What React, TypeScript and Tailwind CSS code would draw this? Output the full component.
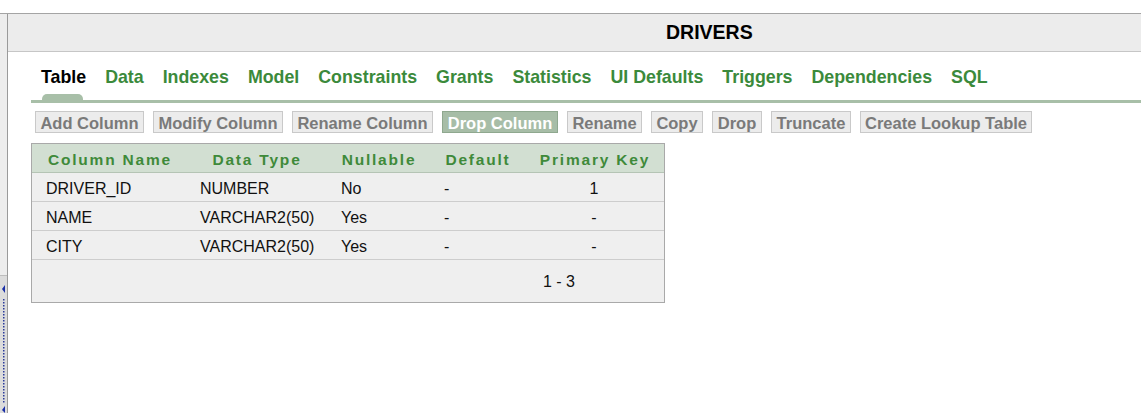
import React from 'react';

const tabs = ['Table', 'Data', 'Indexes', 'Model', 'Constraints', 'Grants', 'Statistics', 'UI Defaults', 'Triggers', 'Dependencies', 'SQL'];

const buttons = [
	{ label: 'Add Column', w: 'w-[109px]' },
	{ label: 'Modify Column', w: 'w-[130px]' },
	{ label: 'Rename Column', w: 'w-[141px]' },
	{ label: 'Drop Column', w: 'w-[116px]', active: true },
	{ label: 'Rename', w: 'w-[75px]' },
	{ label: 'Copy', w: 'w-[52px]' },
	{ label: 'Drop', w: 'w-[50px]' },
	{ label: 'Truncate', w: 'w-[80px]' },
	{ label: 'Create Lookup Table', w: 'w-[172px]' },
];

const rows = [
	['DRIVER_ID', 'NUMBER', 'No', '-', '1'],
	['NAME', 'VARCHAR2(50)', 'Yes', '-', '-'],
	['CITY', 'VARCHAR2(50)', 'Yes', '-', '-'],
];

const headers = ['Column Name', 'Data Type', 'Nullable', 'Default', 'Primary Key'];

const Splitter = () => (
	<svg width="7" height="137" viewBox="0 0 7 137" className="block">
		<path d="M5 9 L2 13 L5 17 Z" fill="#1a2fa8" />
		{Array.from({ length: 35 }).map((_, i) => (
			<rect key={i} x="3" y={23 + i * 3} width="1.5" height="1.5" fill="#2a3a9a" />
		))}
		<path d="M5 130 L2 134 L5 137 Z" fill="#1a2fa8" />
	</svg>
);

const App = () => {
	return (
		<div className="w-[1141px] h-[413px] overflow-hidden bg-white font-['Liberation_Sans',Arial,sans-serif]">
			<div className="h-[13px]" />
			<div className="flex h-[400px] border-t border-[#a4a4a4]">
				{/* Left pane */}
				<div className="flex w-[7px] flex-col">
					<div className="h-[263px] bg-[#ededed]" />
					<div className="flex-1 border-t border-[#bdbdbd] bg-[#dcdcdc]">
						<Splitter />
					</div>
				</div>
				<div className="w-px bg-[#9a9a9a]" />

				{/* Main */}
				<div className="flex flex-1 flex-col">
					<div className="flex h-[38px] items-center border-b border-[#c6c6c6] bg-[#ececec] pl-[658px]">
						<span className="text-[19.5px] font-bold text-black">DRIVERS</span>
					</div>

					<div className="pl-[23px]">
						{/* Tabs */}
						<div className="relative mt-[13px] flex h-[38px] items-start border-b-[3px] border-[#a8bfa8] pl-[10px]">
							{tabs.map((t, i) => (
								<span
									key={t}
									className={`mr-[19px] h-[24px] text-[17.8px] font-bold leading-[24px] ${i === 0 ? 'text-black' : 'text-[#3b8a3b]'}`}
								>
									{t}
								</span>
							))}
							<div className="absolute bottom-0 left-[11px] h-[6px] w-[41px] rounded-t-[5px] bg-[#a8bfa8]" />
						</div>

						{/* Buttons */}
						<div className="mt-[8px] flex gap-[9px] pl-[4px]">
							{buttons.map((b) => (
								<div
									key={b.label}
									className={`${b.w} flex h-[22px] items-center justify-center border pt-[3px] text-[16.5px] font-bold whitespace-nowrap ${
										b.active ? 'border-[#8fa88f] bg-[#a7bda7] text-white' : 'border-[#c9c9c9] bg-[#ececec] text-[#7a7a7a]'
									}`}
								>
									{b.label}
								</div>
							))}
						</div>

						{/* Table */}
						<div className="mt-[10px] w-[634px] border border-[#a9a9a9] bg-[#efefef]">
							<div className="grid h-[29px] grid-cols-[154px_140px_104px_94px_140px] items-center border-b border-[#b5c4b5] bg-[#d2dfd2] pt-[4px]">
								{headers.map((h) => (
									<div key={h} className="pl-[2px] text-center text-[15.5px] font-bold tracking-[1.8px] text-[#3f8a3a]">
										{h}
									</div>
								))}
							</div>
							{rows.map((r) => (
								<div
									key={r[0]}
									className="grid h-[29px] grid-cols-[154px_140px_104px_94px_140px] items-center border-b border-[#cdcdcd] pt-[4px] text-[16px] text-[#111]"
								>
									<div className="pl-[14px]">{r[0]}</div>
									<div className="pl-[14px]">{r[1]}</div>
									<div className="pl-[15px]">{r[2]}</div>
									<div className="pl-[14px]">{r[3]}</div>
									<div className="text-center">{r[4]}</div>
								</div>
							))}
							<div className="flex h-[42px] items-center pl-[511px] pt-[2px] text-[16px] text-[#111]">1 - 3</div>
						</div>
					</div>
				</div>
			</div>
		</div>
	);
};

export default App;
